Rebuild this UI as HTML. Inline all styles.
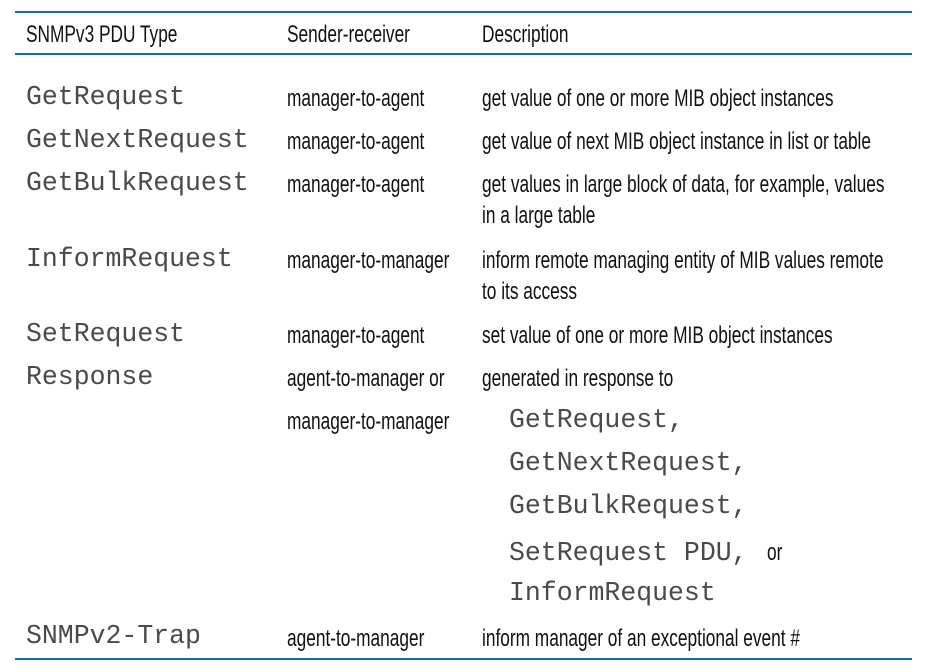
<!DOCTYPE html>
<html><head><meta charset="utf-8"><style>
body{margin:0;width:937px;height:672px;background:#fff;position:relative;overflow:hidden}
.l{position:absolute;left:15px;width:897px;height:2px;background:#1f6b98}
.s{position:absolute;font-family:"Liberation Sans",sans-serif;font-size:24px;line-height:28px;color:#111;transform:scaleX(0.72);transform-origin:left top;white-space:nowrap}
.m{position:absolute;font-family:"Liberation Mono",monospace;font-size:26.5px;line-height:28px;color:#4a4a4a;white-space:nowrap}
</style></head><body>
<div class="l" style="top:11px"></div>
<div class="l" style="top:53px"></div>
<div class="l" style="top:658px"></div>
<div class="s" style="left:26px;top:21px">SNMPv3 PDU Type</div>
<div class="s" style="left:287px;top:21px">Sender-receiver</div>
<div class="s" style="left:482px;top:21px">Description</div>

<div class="m" style="left:26px;top:83px">GetRequest</div>
<div class="s" style="left:287px;top:85px">manager-to-agent</div>
<div class="s" style="left:482px;top:85px">get value of one or more MIB object instances</div>

<div class="m" style="left:26px;top:126px">GetNextRequest</div>
<div class="s" style="left:287px;top:128px">manager-to-agent</div>
<div class="s" style="left:482px;top:128px">get value of next MIB object instance in list or table</div>

<div class="m" style="left:26px;top:169px">GetBulkRequest</div>
<div class="s" style="left:287px;top:171px">manager-to-agent</div>
<div class="s" style="left:482px;top:171px">get values in large block of data, for example, values</div>
<div class="s" style="left:482px;top:202px">in a large table</div>

<div class="m" style="left:26px;top:245px">InformRequest</div>
<div class="s" style="left:287px;top:247px">manager-to-manager</div>
<div class="s" style="left:482px;top:247px">inform remote managing entity of MIB values remote</div>
<div class="s" style="left:482px;top:278px">to its access</div>

<div class="m" style="left:26px;top:320px">SetRequest</div>
<div class="s" style="left:287px;top:322px">manager-to-agent</div>
<div class="s" style="left:482px;top:322px">set value of one or more MIB object instances</div>

<div class="m" style="left:26px;top:363px">Response</div>
<div class="s" style="left:287px;top:365px">agent-to-manager or</div>
<div class="s" style="left:287px;top:408px">manager-to-manager</div>
<div class="s" style="left:482px;top:365px">generated in response to</div>
<div class="m" style="left:509px;top:406px">GetRequest,</div>
<div class="m" style="left:509px;top:449px">GetNextRequest,</div>
<div class="m" style="left:509px;top:492px">GetBulkRequest,</div>
<div class="m" style="left:509px;top:539px">SetRequest PDU,</div>
<div class="s" style="left:767px;top:539px">or</div>
<div class="m" style="left:509px;top:579px">InformRequest</div>

<div class="m" style="left:26px;top:622px">SNMPv2-Trap</div>
<div class="s" style="left:287px;top:625px">agent-to-manager</div>
<div class="s" style="left:482px;top:625px">inform manager of an exceptional event #</div>
</body></html>
